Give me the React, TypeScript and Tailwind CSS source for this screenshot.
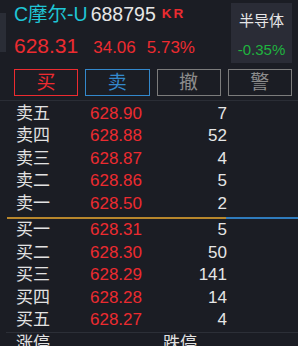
import React from 'react';

const sellRows = [
  { label: '卖五', price: '628.90', vol: '7' },
  { label: '卖四', price: '628.88', vol: '52' },
  { label: '卖三', price: '628.87', vol: '4' },
  { label: '卖二', price: '628.86', vol: '5' },
  { label: '卖一', price: '628.50', vol: '2' },
];

const buyRows = [
  { label: '买一', price: '628.31', vol: '5' },
  { label: '买二', price: '628.30', vol: '50' },
  { label: '买三', price: '628.29', vol: '141' },
  { label: '买四', price: '628.28', vol: '14' },
  { label: '买五', price: '628.27', vol: '4' },
];

const actions = [
  { label: '买', cls: 'text-[#ec2b30] border-[#ec2b30]' },
  { label: '卖', cls: 'text-[#3388cc] border-[#3388cc]' },
  { label: '撤', cls: 'text-[#8c8c8c] border-[#7c7c7c]' },
  { label: '警', cls: 'text-[#8c8c8c] border-[#7c7c7c]' },
];

const QuoteRow: React.FC<{ label: string; price: string; vol: string }> = ({ label, price, vol }) => (
  <div className="flex h-[22.5px] items-center pl-[16px] text-[17px] leading-[22.5px]">
    <span className="w-[74px] text-[#e2e2e2]">{label}</span>
    <span className="w-[80px] text-[#ec2b30]">{price}</span>
    <span className="w-[57px] text-right text-[#e6e6e6]">{vol}</span>
  </div>
);

export default function App() {
  return (
    <div
      className="relative h-[346px] w-[298px] overflow-hidden bg-[#1b1d24]"
      style={{ fontFamily: '"Liberation Sans", "Noto Sans CJK SC", sans-serif' }}
    >
      {/* scroll handle on the left edge */}
      <div className="absolute left-0 top-[13px] h-[39px] w-[6px] bg-[#2a2d36]" />

      {/* Header */}
      <div className="flex h-[63px] pl-[14px]">
        <div className="flex-1 pt-[4px]">
          <div className="h-[20px] whitespace-nowrap text-[19.5px] leading-[20px]">
            <span className="text-[#1fc6d6]">C摩尔-U</span>
            <span className="ml-[3px] text-[#e6e6e6]">688795</span>
            <span className="ml-[6px] align-[3px] text-[13.5px] font-bold tracking-[2px] text-[#ec2b30]">KR</span>
          </div>
          <div className="mt-[10px] flex h-[24px] items-baseline whitespace-nowrap leading-[24px] text-[#ec2b30]">
            <span className="text-[21px]">628.31</span>
            <span className="ml-[15px] text-[17px]">34.06</span>
            <span className="ml-[11px] text-[17px]">5.73%</span>
          </div>
        </div>
        <div className="mr-[6px] mt-[3px] flex h-[60px] w-[61px] flex-col items-center bg-[#2a2c36]">
          <span className="mt-[8px] text-[15px] leading-[20px] text-[#e6e6e6]">半导体</span>
          <span className="mt-[10px] text-[15px] leading-[18px] text-[#1fb33f]">-0.35%</span>
        </div>
      </div>

      {/* Action buttons */}
      <div className="mt-[6px] grid grid-cols-4 gap-[7px] pl-[14px] pr-[6px]">
        {actions.map((a) => (
          <div
            key={a.label}
            className={`flex h-[27px] items-center justify-center border text-[19px] leading-none ${a.cls}`}
          >
            {a.label}
          </div>
        ))}
      </div>

      {/* Order book */}
      <div className="mt-[4px] border-t border-[#2a2d35] pt-[1.5px]">
        {sellRows.map((r) => (
          <QuoteRow key={r.label} {...r} />
        ))}
        <div className="ml-[7px] mt-[2px] flex h-[2px]">
          <div className="w-[219px] bg-[#b8872c]" />
          <div className="flex-1 bg-[#2f7bbd]" />
        </div>
        {buyRows.map((r) => (
          <QuoteRow key={r.label} {...r} />
        ))}
      </div>

      {/* Limit prices */}
      <div className="ml-[6px] flex h-[24px] items-center border-t border-[#2c2f37] pl-[10px] text-[17px] leading-[24px]">
        <span className="w-[100px] text-[#e2e2e2]">涨停</span>
        <span className="w-[47px] pt-[10px] text-[13px] text-[#6f7278]">--</span>
        <span className="w-[105px] text-[#e2e2e2]">跌停</span>
        <span className="pt-[10px] text-[13px] text-[#6f7278]">--</span>
      </div>
    </div>
  );
}
